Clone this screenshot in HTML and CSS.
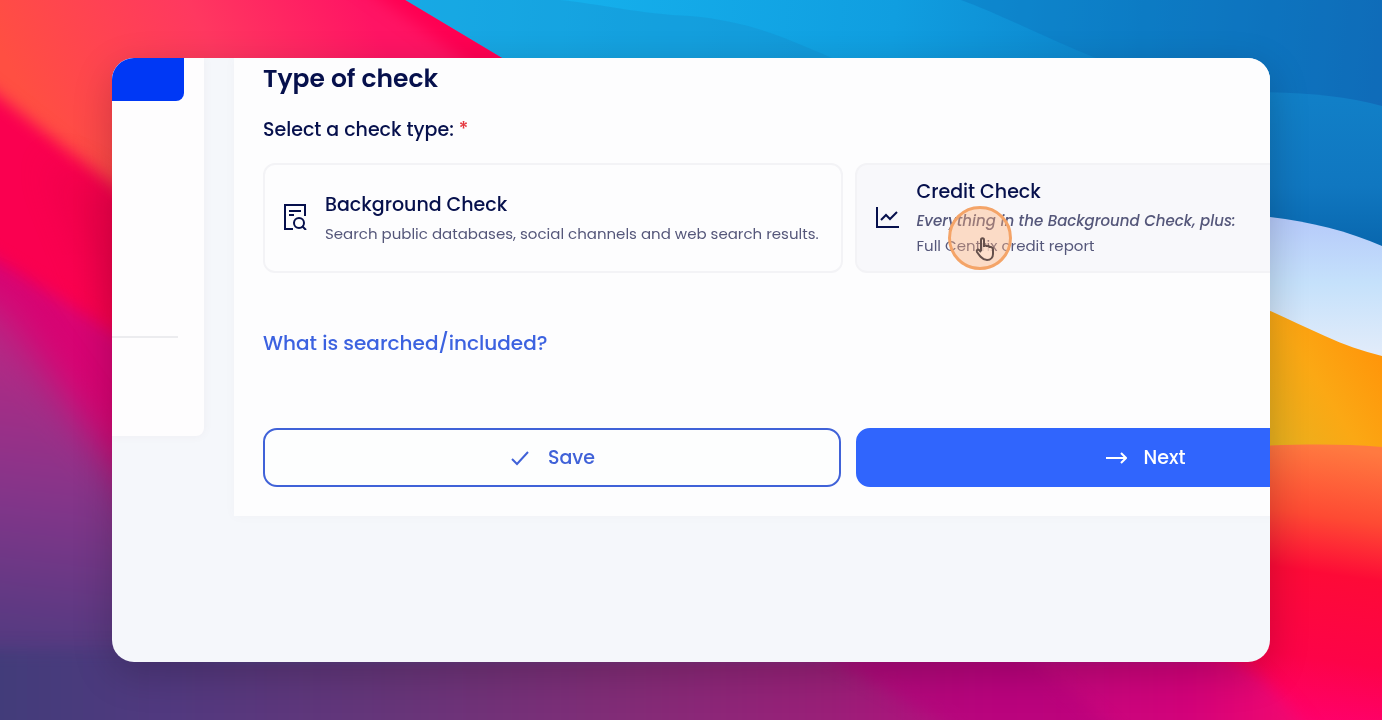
FILE: index.html
```
<!DOCTYPE html>
<html lang="en">
<head>
    <meta charset="utf-8">
    <title>Type of check</title>
    <link rel="stylesheet" href="styles.css">
</head>
<body>
    <!-- Wallpaper -->
    <svg class="wallpaper" viewBox="0 0 1382 720" preserveAspectRatio="none" aria-hidden="true">
        <defs>
            <linearGradient id="sky" x1="400" y1="0" x2="1382" y2="100" gradientUnits="userSpaceOnUse">
                <stop offset="0" stop-color="#18b9f2"/>
                <stop offset="0.5" stop-color="#109ee0"/>
                <stop offset="0.75" stop-color="#0d82ca"/>
                <stop offset="1" stop-color="#116ab8"/>
            </linearGradient>
            <linearGradient id="sky-right" x1="0" y1="90" x2="0" y2="250" gradientUnits="userSpaceOnUse">
                <stop offset="0" stop-color="#1180c8"/>
                <stop offset="0.6" stop-color="#1077c0"/>
                <stop offset="1" stop-color="#0866ad"/>
            </linearGradient>
            <linearGradient id="cloud" x1="0" y1="216" x2="0" y2="350" gradientUnits="userSpaceOnUse">
                <stop offset="0" stop-color="#b5c9fa"/>
                <stop offset="0.5" stop-color="#c5e1fb"/>
                <stop offset="1" stop-color="#e0ebfa"/>
            </linearGradient>
            <linearGradient id="sand" x1="1270" y1="430" x2="1382" y2="360" gradientUnits="userSpaceOnUse">
                <stop offset="0" stop-color="#e9b01e"/>
                <stop offset="0.5" stop-color="#fba814"/>
                <stop offset="1" stop-color="#ff960a"/>
            </linearGradient>
            <linearGradient id="ember" x1="1290" y1="440" x2="1250" y2="720" gradientUnits="userSpaceOnUse">
                <stop offset="0" stop-color="#ff7a40"/>
                <stop offset="0.25" stop-color="#fe4a33"/>
                <stop offset="0.45" stop-color="#fd0a37"/>
                <stop offset="0.75" stop-color="#fd0348"/>
                <stop offset="1" stop-color="#ff006f"/>
            </linearGradient>
            <linearGradient id="dusk" x1="0" y1="200" x2="-60" y2="720" gradientUnits="userSpaceOnUse">
                <stop offset="0" stop-color="#e2107a"/>
                <stop offset="0.3" stop-color="#b02a85"/>
                <stop offset="0.55" stop-color="#85358a"/>
                <stop offset="0.8" stop-color="#5a3a82"/>
                <stop offset="1" stop-color="#413b7a"/>
            </linearGradient>
            <linearGradient id="floor" x1="0" y1="0" x2="1382" y2="0" gradientUnits="userSpaceOnUse">
                <stop offset="0" stop-color="#423c7a"/>
                <stop offset="0.12" stop-color="#51397f"/>
                <stop offset="0.29" stop-color="#673579"/>
                <stop offset="0.45" stop-color="#822c77"/>
                <stop offset="0.6" stop-color="#9a1f78"/>
                <stop offset="0.72" stop-color="#bd0a80"/>
                <stop offset="0.86" stop-color="#d3027a"/>
                <stop offset="0.94" stop-color="#f3086f"/>
                <stop offset="1" stop-color="#ff006e"/>
            </linearGradient>
            <linearGradient id="flame" x1="60" y1="160" x2="360" y2="0" gradientUnits="userSpaceOnUse">
                <stop offset="0" stop-color="#ff4f42"/>
                <stop offset="0.55" stop-color="#ff3860"/>
                <stop offset="1" stop-color="#ff1464"/>
            </linearGradient>
            <filter id="soft" x="-50%" y="-50%" width="200%" height="200%" color-interpolation-filters="sRGB"><feGaussianBlur stdDeviation="8"/></filter>
            <filter id="softer" x="-50%" y="-50%" width="200%" height="200%" color-interpolation-filters="sRGB"><feGaussianBlur stdDeviation="18"/></filter>
            <clipPath id="red-hill"><path d="M0 0H405L502 58L600 130H200V600H0z"/></clipPath>
        </defs>

        <rect width="1382" height="720" fill="url(#sky)"/>
        <path d="M560 0C600 4 640 14 690 16C760 22 800 45 860 70H400V0z" fill="#1689c6" opacity="0.3"/>
        <path d="M961 0C1000 14 1050 40 1096 58L1170 100H1382V0z" fill="#0b70ba" opacity="0.35"/>
        <path d="M1200 94C1270 90 1330 92 1382 106V280H1200z" fill="url(#sky-right)"/>
        <path d="M1200 212C1270 214 1330 223 1382 246V400H1200z" fill="url(#cloud)"/>
        <path d="M1200 287C1270 302 1320 342 1382 356V500H1200z" fill="url(#sand)"/>
        <path d="M1200 448C1270 446 1320 442 1382 447V720H1200z" fill="url(#ember)"/>

        <g clip-path="url(#red-hill)">
            <rect width="600" height="600" fill="url(#flame)"/>
            <path d="M400 -30L520 60L560 110H520C470 60 430 35 340 -30z" fill="#ff0052" filter="url(#soft)"/>
            <path d="M-60 50L0 97L112 185L180 240V700H-60z" fill="#fa0050" filter="url(#soft)"/>
            <path d="M50 160L112 195L180 240V340L112 320z" fill="#d90040" opacity="0.4" filter="url(#softer)"/>
            <path d="M-60 225L0 262L112 332L180 380V800H-60z" fill="#d80473" filter="url(#soft)"/>
        </g>
        <path d="M-100 270L0 305L125 480L210 665V900H-100z" fill="url(#dusk)" filter="url(#softer)"/>

        <path d="M-100 650H1200C1240 650 1290 690 1350 800H-100z" fill="url(#floor)" filter="url(#soft)"/>
        <path d="M780 630L1010 760H1150L1010 640z" fill="#b8007c" opacity="0.6" filter="url(#soft)"/>
    </svg>

    <div class="window">
        <aside class="sidebar">
            <div class="nav-active"></div>
            <hr class="divider">
        </aside>

        <main class="panel">
            <h1>Type of check</h1>
            <form action="#" method="post">
                <fieldset class="check-types">
                    <legend>Select a check type: <span class="required">*</span></legend>
                    <div class="columns cards">
                        <label class="card">
                            <input type="radio" name="check" value="background">
                            <svg class="icon" viewBox="0 0 24 26" aria-hidden="true">
                                <path d="M10 25H2V1H22V12M6 7H18M6 11H11"/>
                                <circle cx="16" cy="19" r="5"/>
                                <path d="M19 22L23 26"/>
                            </svg>
                            <span class="card-text">
                                <span class="card-title">Background Check</span>
                                <span class="card-info">Search public databases, social channels and web search results.</span>
                            </span>
                        </label>
                        <label class="card hovered">
                            <input type="radio" name="check" value="credit">
                            <svg class="icon" viewBox="0 0 24 26" aria-hidden="true">
                                <path d="M2 3V23H24M6 16L11 11L15 15L22 8"/>
                            </svg>
                            <span class="card-text">
                                <span class="card-title">Credit Check</span>
                                <span class="card-info"><em>Everything in the Background Check, plus:</em></span>
                                <span class="card-info">Full Centrix credit report</span>
                            </span>
                            <!-- Click marker -->
                            <span class="click">
                                <svg class="hand" viewBox="0 0 20 24" aria-hidden="true">
                                    <path d="M6 14V3C6 0.500 9 0.500 9 3V10C9 8 12 8 12 10C12 8.500 15 8.500 15 11C15 9.500 18 10 18 12V17C18 20 16 23 12 23C8 23 7 21 5 19L2 15C1 13 3 12 4 13L6 15"/>
                                </svg>
                            </span>
                        </label>
                    </div>
                </fieldset>

                <a class="included" href="#">What is searched/included?</a>

                <div class="columns">
                    <button type="submit" class="btn btn-save">
                        <svg class="btn-icon" viewBox="0 0 22 22" aria-hidden="true"><path d="M3 12L8 17L19 5"/></svg>
                        Save
                    </button>
                    <button type="button" class="btn btn-next">
                        <svg class="btn-icon" viewBox="0 0 22 22" aria-hidden="true"><path d="M1 11H21M16 6L21 11L16 16"/></svg>
                        Next
                    </button>
                </div>
            </form>
        </main>
    </div>
</body>
</html>
```
FILE: styles.css
```
* {
    box-sizing: border-box;
}

body {
    display: flex;
    min-height: 100vh;
    margin: 0;
    padding: 58px 112px;
    overflow: hidden;
    color: #06104c;
    font-family: Poppins, Inter, sans-serif;
    font-weight: 500;
}

.wallpaper {
    position: fixed;
    inset: 0;
    width: 100%;
    height: 100%;
}

.window {
    position: relative;
    display: flex;
    flex: 1;
    align-items: flex-start;
    gap: 30px;
    min-width: 0;
    overflow: hidden;
    background-color: #f5f7fb;
    border-radius: 22px;
    box-shadow: 0 12px 40px rgba(0, 0, 0, 0.2);
}

.sidebar {
    flex: none;
    width: 92px;
    padding-bottom: 98px;
    background-color: #fefdfe;
    border-radius: 0 0 8px 0;
    box-shadow: 0 0 10px rgba(120, 90, 110, 0.06);
}

.nav-active {
    height: 43px;
    margin-right: 20px;
    background-color: #0038f5;
    border-radius: 0 0 8px 0;
}

.divider {
    height: 2px;
    margin: 235px 26px 0 0;
    border: none;
    background-color: #ececef;
}

/* Runs past the right edge of the window */
.panel {
    flex: 1;
    margin-right: -193px;
    padding: 4px 29px 29px;
    background-color: #fdfdfe;
    box-shadow: 0 0 10px rgba(120, 90, 110, 0.04);
}

h1 {
    margin: 0;
    font-size: 25px;
    font-weight: 600;
    line-height: 34px;
}

.check-types {
    min-width: 0;
    margin: 0;
    padding: 0;
    border: none;
}

legend {
    padding: 19px 0 18px;
    font-size: 19px;
    line-height: 30px;
}

.required {
    color: #e5383f;
}

.columns {
    display: grid;
    grid-template-columns: 1fr 1fr;
    gap: 15px;
}

.cards {
    gap: 12px;
}

.card {
    position: relative;
    display: flex;
    align-items: center;
    gap: 18px;
    height: 110px;
    padding: 0 18px 2px;
    border: 2px solid #f3f3f6;
    border-radius: 12px;
    cursor: pointer;
}

.card input {
    position: absolute;
    opacity: 0;
}

.hovered {
    background-color: #f8f8fb;
}

.icon {
    flex: none;
    width: 24px;
    height: 26px;
    fill: none;
    stroke: #06104c;
    stroke-width: 2;
}

.card-text {
    display: flex;
    flex-direction: column;
}

.card-title {
    font-size: 19px;
    line-height: 32px;
}

.card-info {
    color: #55577a;
    font-size: 15px;
    font-weight: 400;
    line-height: 25px;
    white-space: nowrap;
}

.card-info em {
    font-weight: 500;
}

.click {
    position: absolute;
    top: 41px;
    left: 91px;
    width: 64px;
    height: 64px;
    border: 3px solid #f4a468;
    border-radius: 50%;
    background-color: rgba(255, 176, 120, 0.4);
}

.hand {
    position: absolute;
    top: 28px;
    left: 24px;
    width: 20px;
    height: 24px;
    fill: rgba(255, 225, 205, 0.7);
    stroke: #65504b;
    stroke-width: 2;
}

.included {
    display: block;
    width: fit-content;
    margin: 54px 0 69px;
    color: #3c62e0;
    font-size: 20px;
    line-height: 32px;
    text-decoration: none;
}

.btn {
    display: flex;
    align-items: center;
    justify-content: center;
    gap: 17px;
    height: 59px;
    padding: 0;
    border: 2px solid #4062d8;
    border-radius: 14px;
    font: inherit;
    font-size: 19px;
    cursor: pointer;
}

.btn-save {
    background-color: #fdfefe;
    color: #4062d8;
}

.btn-next {
    border-color: #3065fd;
    background-color: #3065fd;
    color: #fff;
}

.btn-icon {
    width: 22px;
    height: 22px;
    fill: none;
    stroke: currentColor;
    stroke-width: 2;
}
```
